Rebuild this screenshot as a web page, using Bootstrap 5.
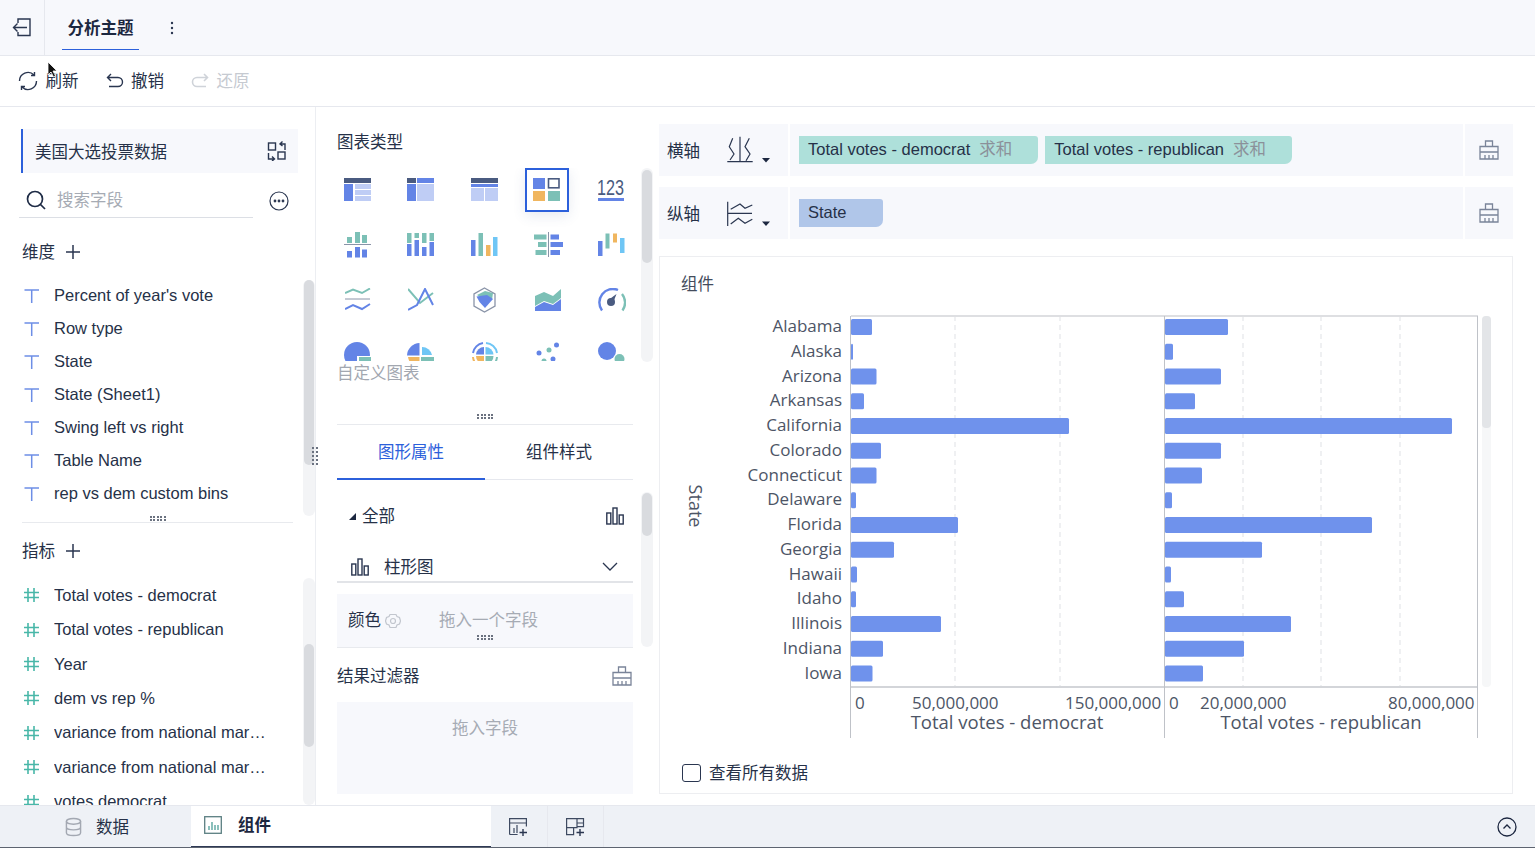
<!doctype html>
<html lang="zh"><head><meta charset="utf-8"><title>分析主题</title>
<link href="https://cdn.jsdelivr.net/npm/bootstrap@5.3.0/dist/css/bootstrap.min.css" rel="stylesheet">
<style>
html,body{height:100%;overflow:hidden}
body{font-family:"Liberation Sans","Noto Sans CJK SC",sans-serif;font-size:16.5px;color:#263148;background:#fff;position:relative}
svg{display:block;flex:none}
.ico{fill:none;stroke:#2a3650;stroke-width:1.4}
.nudge{margin-top:2px}
.app{height:848px;width:1535px}
.topbar{height:56px;background:#f7f8fc;border-bottom:1px solid #e6e8ee}
.backcell{width:45px;height:55px;border-right:1px solid #e6e8ee}
.toptab{margin-left:17px;width:77px;height:50px;border-bottom:1px solid #2c60db;font-weight:700;color:#1c2740;padding-top:16px;align-self:flex-start;text-align:center}
.kebab{margin-left:27px}
.tool-bar{height:51px;border-bottom:1px solid #e6e8ee;padding-left:18px}
.toolbtn{gap:7.5px;margin-right:27px}
.muted-t{color:#c6cad1}
.body-row{height:698px}
.leftp{width:316px;border-right:1px solid #eceef2;padding-top:22px;position:relative}
.dsbox{margin-left:21px;width:277px;height:44px;background:#f7f8fc;border-left:2px solid #2c60db;padding:0 11px 0 12px}
.searchrow{margin:10px 0 0 19px;width:270px}
.searchin{width:234px;height:35px;border-bottom:1px solid #dcdfe5;color:#a6abb4;gap:11px;padding-left:7px}
.head-r{margin-left:22px;gap:11px;height:28px}
.hd1{margin-top:20px}.hd2{margin-top:14px}
.fieldlist{position:relative;margin-left:22px;overflow:hidden}
.fld{gap:14px;white-space:nowrap}
.fld span{display:block;overflow:hidden;text-overflow:ellipsis;width:212px}
.d1{height:237px;margin-top:13px}.d1 .fld{height:33px}
.d2{height:227px;margin-top:13px}.d2 .fld{height:34.4px}
.trk{position:absolute;background:#f3f4f6;border-radius:6px;width:12px}
.thm{position:absolute;background:#d9dbdf;border-radius:5px;width:10px;left:1px}
.trk1{left:303px;top:173px;height:236px}.trk1 .thm{top:0;height:185px}
.trk2{left:303px;top:471px;height:227px}.trk2 .thm{top:66px;height:103px}
.trk3{left:325px;top:61px;height:194px}.trk3 .thm{top:2px;height:93px}
.trk4{left:325px;top:385px;height:155px}.trk4 .thm{top:1px;height:43px}
.grip{display:grid;grid-template-columns:repeat(5,2px);gap:1px 1.5px;width:16px;height:5px;margin:0 auto}
.grip i{background:#6b7280;height:2px}
.gripv{position:absolute;left:312px;top:340px;display:grid;grid-template-columns:repeat(2,2px);gap:2px 2px}
.gripv i{background:#6b7280;width:2px;height:2px}
.gripbox{height:5px;width:271px;margin-left:22px}
.hr1{height:1px;background:#e8eaee;margin:1px 0 0 22px;width:271px}
.midp{width:343px;padding:25px 0 0 21px;position:relative}
.mid-in{width:296px}
.ttl{line-height:20px}
.ctgrid{display:grid;grid-template-columns:repeat(5,44px);column-gap:19.5px;row-gap:11px;height:193px;overflow:hidden;margin:16px 0 0 -2.5px;align-content:start}
.ct{width:44px;height:44px;display:flex;align-items:center;justify-content:center;padding-left:2px}
.ct.sel{border:2px solid #2c60db;box-shadow:0 4px 12px rgba(60,80,140,.12);padding-left:0}
.custom-t{color:#a2a7b0;height:24px;line-height:24px}
.gripm{margin-top:29px}
.hr2{height:1px;background:#e8eaee;margin-top:5px}
.tabs-r{height:55px;border-bottom:1px solid #e6e8ee}
.tb{flex:1;text-align:center;padding-top:15px;height:55px}
.tb.on{color:#2c60db;border-bottom:2px solid #2c60db}
.allrow{height:46px;margin-top:13px;padding:0 9px 0 12px}
.tri{width:0;height:0;border-left:7px solid transparent;border-bottom:7px solid #1c2740;margin-right:6px}
.barsel{height:42px;border-bottom:2px solid #e2e4e8;padding:12px 15px 0 14px;margin-top:2px}
.barlbl{margin-left:15px}
.colorb{margin-top:11px;height:53px;background:#f7f8fc;position:relative;padding:0 0 0 11px}
.ph{color:#a6abb4}
.phc{margin-left:38px}
.gripc{position:absolute;left:140px;top:41px}
.hr3{height:1px;background:#e8eaee}
.rfilt{height:54px;padding:2px 1px 0 0}
.dropz{height:92px;background:#f7f8fc;text-align:center;padding-top:14px}
.rightp{width:854px;padding-top:17px}
.axisrow{height:52px;background:#f7f8fc;margin-bottom:11px}
.axlab{width:131px;height:52px;border-right:2px solid #fff;padding-left:8px}
.axic{margin-left:27px}
.axpills{flex:1;padding-left:9px;gap:7px}
.pill{height:28px;border-radius:0 3px 7px 0;padding:0 26px 2px 9px;white-space:nowrap;gap:9px}
.pillg{background:#aee0da}.pillb{background:#b0c6e9;width:84px}
.sumt{color:#8b9099}
.axbr{width:50px;height:52px;border-left:2px solid #fff}
.chartc{height:538px;width:854px;border:1px solid #edeef1;margin-top:17px;padding:15px 21px}
.chartt{height:25px;line-height:25px;color:#444c5c}
.cl{font-family:"Open Sans",sans-serif;font-size:17px;fill:#4d5566}
.cl2{font-size:18.5px}
.cl3{font-size:18px}
.viewall{gap:8px;margin:14px 0 0 1px}
.cbx{width:19px;height:18px;border:1.4px solid #2a3650;border-radius:3px;background:#fff}
.footbar{height:43px;background:#eef1f6;border-top:1px solid #e6e8ee;position:relative}
.ftab{height:42px}
.ftab1{width:191px;padding-left:65px;gap:14px}
.ftab2{width:300px;background:#fff;padding-left:13px;font-weight:700;gap:16px;border-bottom:2px solid #2f3a55;padding-bottom:2px;color:#1c2740}
.fbtn{width:56.5px;height:42px;border-right:1px solid #e6e8ee}
.fend{margin-left:auto;margin-right:18px}
.cursor{position:absolute;left:47px;top:61px;z-index:5}
.bline{position:absolute;left:0;right:0;bottom:0;height:1px;background:#5d6470}
</style></head><body>
<div class="app d-flex flex-column">
 <div class="topbar d-flex align-items-center">
  <div class="backcell d-flex align-items-center justify-content-center">
   <svg width="20" height="20" viewBox="0 0 20 20" class="ico"><path d="M6 5V1h12v16.500H6v-3.500M15 9.500H1.500M5.500 5.500 1.500 9.500l4 4"/></svg>
  </div>
  <div class="toptab">分析主题</div>
  <svg class="kebab" width="12" height="14" viewBox="0 0 12 14" fill="#2a3650"><circle cx="6" cy="2" r="1.2"/><circle cx="6" cy="7" r="1.2"/><circle cx="6" cy="12" r="1.2"/></svg>
 </div>
 <div class="tool-bar d-flex align-items-center">
  <div class="toolbtn d-flex align-items-center">
   <svg width="20" height="20" viewBox="0 0 20 20" class="ico"><path d="M1.500 10A8.500 8.500 0 0 1 16 4M18.500 10A8.500 8.500 0 0 1 4 16M16.500 1v3.500H13M3.500 19v-3.500H7"/></svg><span>刷新</span></div>
  <div class="toolbtn d-flex align-items-center">
   <svg width="18" height="18" viewBox="0 0 18 18" class="ico"><path d="M5 2 1.500 5.500 5 9M2 5.500h10a4.500 4.500 0 0 1 0 9H3"/></svg><span>撤销</span></div>
  <div class="toolbtn d-flex align-items-center muted-t">
   <svg width="18" height="18" viewBox="0 0 18 18" fill="none" stroke="#cfd3d9" stroke-width="1.600"><path d="M13 2 16.500 5.500 13 9M16 5.500H6a4.500 4.500 0 0 0 0 9h9"/></svg><span>还原</span></div>
 </div>
 <div class="body-row d-flex">
  <div class="leftp">
   <div class="dsbox d-flex align-items-center justify-content-between">
    <span class="nudge">美国大选投票数据</span>
    <svg width="20" height="20" viewBox="0 0 20 20" class="ico"><rect x="1.500" y="2" width="7" height="7"/><rect x="11" y="11" width="7" height="7"/><path d="M1.500 12v6H7M5 15.500 7.500 18 5 20M18 9V3h-5M15.500 5 13 3l2.500-2.500"/></svg>
   </div>
   <div class="searchrow d-flex justify-content-between align-items-center">
    <div class="searchin d-flex align-items-center">
     <svg width="20" height="20" viewBox="0 0 20 20" fill="none" stroke="#1f2c46" stroke-width="1.700"><circle cx="9" cy="9" r="7.500"/><path d="m14.500 14.500 4.500 4.500"/></svg><span>搜索字段</span></div>
    <svg width="20" height="20" viewBox="0 0 20 20" fill="none" stroke="#2a3650" stroke-width="1.200"><circle cx="10" cy="10" r="9"/><circle cx="6" cy="10" r=".8" fill="#2a3650"/><circle cx="10" cy="10" r=".8" fill="#2a3650"/><circle cx="14" cy="10" r=".8" fill="#2a3650"/></svg>
   </div>
   <div class="head-r hd1 d-flex align-items-center"><span>维度</span>
    <svg width="14" height="14" viewBox="0 0 14 14" stroke="#2a3650" stroke-width="1.500"><path d="M7 0v14M0 7h14"/></svg></div>
   <div class="fieldlist d1">
    <div class="fld d-flex align-items-center"><svg width="18" height="14" viewBox="0 0 18 14" stroke="#6d8ee6" stroke-width="1.500" fill="none"><path d="M2.500 1h14.500M9.700 1v13"/></svg><span>Percent of year's vote</span></div>
    <div class="fld d-flex align-items-center"><svg width="18" height="14" viewBox="0 0 18 14" stroke="#6d8ee6" stroke-width="1.500" fill="none"><path d="M2.500 1h14.500M9.700 1v13"/></svg><span>Row type</span></div>
    <div class="fld d-flex align-items-center"><svg width="18" height="14" viewBox="0 0 18 14" stroke="#6d8ee6" stroke-width="1.500" fill="none"><path d="M2.500 1h14.500M9.700 1v13"/></svg><span>State</span></div>
    <div class="fld d-flex align-items-center"><svg width="18" height="14" viewBox="0 0 18 14" stroke="#6d8ee6" stroke-width="1.500" fill="none"><path d="M2.500 1h14.500M9.700 1v13"/></svg><span>State (Sheet1)</span></div>
    <div class="fld d-flex align-items-center"><svg width="18" height="14" viewBox="0 0 18 14" stroke="#6d8ee6" stroke-width="1.500" fill="none"><path d="M2.500 1h14.500M9.700 1v13"/></svg><span>Swing left vs right</span></div>
    <div class="fld d-flex align-items-center"><svg width="18" height="14" viewBox="0 0 18 14" stroke="#6d8ee6" stroke-width="1.500" fill="none"><path d="M2.500 1h14.500M9.700 1v13"/></svg><span>Table Name</span></div>
    <div class="fld d-flex align-items-center"><svg width="18" height="14" viewBox="0 0 18 14" stroke="#6d8ee6" stroke-width="1.500" fill="none"><path d="M2.500 1h14.500M9.700 1v13"/></svg><span>rep vs dem custom bins</span></div>
   </div>
   <div class="gripbox"><div class="grip"><i></i><i></i><i></i><i></i><i></i><i></i><i></i><i></i><i></i><i></i></div></div>
   <div class="hr1"></div>
   <div class="head-r hd2 d-flex align-items-center"><span>指标</span>
    <svg width="14" height="14" viewBox="0 0 14 14" stroke="#2a3650" stroke-width="1.500"><path d="M7 0v14M0 7h14"/></svg></div>
   <div class="fieldlist d2">
    <div class="fld d-flex align-items-center"><svg width="18" height="16" viewBox="0 0 18 16" stroke="#48b7a8" stroke-width="1.600"><path d="M6 1v14M12 1v14M2 5.500h15M2 10.500h15"/></svg><span>Total votes - democrat</span></div>
    <div class="fld d-flex align-items-center"><svg width="18" height="16" viewBox="0 0 18 16" stroke="#48b7a8" stroke-width="1.600"><path d="M6 1v14M12 1v14M2 5.500h15M2 10.500h15"/></svg><span>Total votes - republican</span></div>
    <div class="fld d-flex align-items-center"><svg width="18" height="16" viewBox="0 0 18 16" stroke="#48b7a8" stroke-width="1.600"><path d="M6 1v14M12 1v14M2 5.500h15M2 10.500h15"/></svg><span>Year</span></div>
    <div class="fld d-flex align-items-center"><svg width="18" height="16" viewBox="0 0 18 16" stroke="#48b7a8" stroke-width="1.600"><path d="M6 1v14M12 1v14M2 5.500h15M2 10.500h15"/></svg><span>dem vs rep %</span></div>
    <div class="fld d-flex align-items-center"><svg width="18" height="16" viewBox="0 0 18 16" stroke="#48b7a8" stroke-width="1.600"><path d="M6 1v14M12 1v14M2 5.500h15M2 10.500h15"/></svg><span>variance from national margin</span></div>
    <div class="fld d-flex align-items-center"><svg width="18" height="16" viewBox="0 0 18 16" stroke="#48b7a8" stroke-width="1.600"><path d="M6 1v14M12 1v14M2 5.500h15M2 10.500h15"/></svg><span>variance from national margin</span></div>
    <div class="fld d-flex align-items-center"><svg width="18" height="16" viewBox="0 0 18 16" stroke="#48b7a8" stroke-width="1.600"><path d="M6 1v14M12 1v14M2 5.500h15M2 10.500h15"/></svg><span>votes democrat</span></div>
   </div>
   <div class="trk trk1"><div class="thm"></div></div>
   <div class="trk trk2"><div class="thm"></div></div>
   <div class="gripv"><i></i><i></i><i></i><i></i><i></i><i></i><i></i><i></i><i></i><i></i></div>
  </div>
  <div class="midp">
   <div class="mid-in">
    <div class="ttl">图表类型</div>
    <div class="ctgrid">
     <div class="ct"><svg width="28" height="24"><rect width="27" height="5" fill="#4a5b80"/><rect y="6" width="9" height="17" fill="#6384e6"/><rect x="11" y="6" width="16" height="5" fill="#bfcdf5"/><rect x="11" y="12" width="16" height="5" fill="#bfcdf5"/><rect x="11" y="18" width="16" height="5" fill="#bfcdf5"/></svg></div>
     <div class="ct"><svg width="28" height="24"><rect width="9" height="5" fill="#4a5b80"/><rect x="10" width="17" height="5" fill="#6384e6"/><rect y="6" width="9" height="17" fill="#6384e6"/><rect x="10" y="6" width="17" height="17" fill="#bfcdf5"/></svg></div>
     <div class="ct"><svg width="28" height="24"><rect width="27" height="5" fill="#4a5b80"/><rect y="6" width="27" height="3" fill="#6384e6"/><rect y="10" width="13" height="13" fill="#bfcdf5"/><rect x="14" y="10" width="13" height="13" fill="#bfcdf5"/></svg></div>
     <div class="ct sel"><svg width="28" height="24"><rect width="12" height="11" fill="#6384e6"/><rect x="15.500" y=".8" width="10.500" height="9" fill="#fff" stroke="#4a5b80" stroke-width="1.600"/><rect y="13" width="12" height="10" fill="#f0b65f"/><rect x="15" y="13" width="12" height="10" fill="#7cc0b6"/></svg></div>
     <div class="ct"><svg width="28" height="26"><text x="-1" y="18" font-family="Liberation Sans,sans-serif" font-size="22" fill="#4a5b80" textLength="27" lengthAdjust="spacingAndGlyphs">123</text><rect x="-1" y="21" width="27" height="3" fill="#6384e6"/></svg></div>
     <div class="ct"><svg width="28" height="26"><rect x="3" y="5" width="5" height="6" fill="#7cc0b6"/><rect x="11" width="5" height="11" fill="#7cc0b6"/><rect x="18" y="3" width="5" height="8" fill="#7cc0b6"/><rect y="12" width="27" height="1" fill="#8a94a8"/><rect x="3" y="19" width="5" height="6.500" fill="#6384e6"/><rect x="11" y="15" width="5" height="10.500" fill="#6384e6"/><rect x="18" y="17.500" width="5" height="8" fill="#6384e6"/></svg></div>
     <div class="ct"><svg width="28" height="24"><rect width="4.500" height="10" fill="#7cc0b6"/><rect y="11" width="4.500" height="12" fill="#6384e6"/><rect x="7.500" width="4.500" height="5" fill="#7cc0b6"/><rect x="7.500" y="7" width="4.500" height="16" fill="#6384e6"/><rect x="15" width="4.500" height="10" fill="#7cc0b6"/><rect x="15" y="14" width="4.500" height="9" fill="#6384e6"/><rect x="22.500" width="4.500" height="8" fill="#7cc0b6"/><rect x="22.500" y="9" width="4.500" height="14" fill="#6384e6"/></svg></div>
     <div class="ct"><svg width="28" height="24"><rect y="7" width="4.500" height="16" fill="#6384e6"/><rect x="7.500" width="4.500" height="23" fill="#7cc0b6"/><rect x="15" y="12" width="4.500" height="11" fill="#f0b65f"/><rect x="22" y="4" width="4.500" height="19" fill="#6fc6f5"/></svg></div>
     <div class="ct"><svg width="29" height="26"><rect x="14" width="1" height="25" fill="#8a94a8"/><rect y="2.500" width="12.500" height="5" fill="#7cc0b6"/><rect x="4" y="10" width="8.500" height="5" fill="#7cc0b6"/><rect x="1.500" y="18" width="11" height="5" fill="#7cc0b6"/><rect x="16.500" y="2.500" width="8.500" height="5" fill="#6384e6"/><rect x="16.500" y="10" width="12.500" height="5" fill="#6384e6"/><rect x="16.500" y="18" width="9.500" height="5" fill="#6384e6"/></svg></div>
     <div class="ct"><svg width="28" height="24"><rect y="8" width="4.500" height="15" fill="#6384e6"/><rect x="7.500" y=".5" width="4" height="15" fill="#7cc0b6"/><rect x="15" y=".5" width="4" height="9" fill="#f0b65f"/><rect x="22" y="5" width="4.500" height="15" fill="#6fc6f5"/></svg></div>
     <div class="ct"><svg width="26" height="24" fill="none" stroke-width="2"><path d="m0 5 8-3.500L17 5l8-4.500" stroke="#7cc0b6"/><path d="M0 11h25" stroke="#8a94a8" stroke-width="1"/><path d="m0 21 8-4 9 4 8-5" stroke="#6384e6"/></svg></div>
     <div class="ct"><svg width="27" height="24" fill="none" stroke-width="2"><path d="m0 1 12 14L25 5" stroke="#7cc0b6"/><path d="m0 22 9-5 8-16 8 16" stroke="#6384e6"/></svg></div>
     <div class="ct"><svg width="24" height="26"><path d="m11.500 1 10.500 6v12l-10.500 6L1 19V7z" fill="#fff" stroke="#8a94a8" stroke-width="1.300"/><path d="m4 8 8-4 8 2-1 7-9-1z" fill="#7cc0b6"/><path d="m3.500 9.500 10.500-1.500 6 4-8 9-5.500-6z" fill="#6384e6"/></svg></div>
     <div class="ct"><svg width="27" height="23"><path d="m0 7 9-4 9 4 8-7v22H0z" fill="#7cc0b6"/><path d="m0 17 9-5 9 3 8-6v13H0z" fill="#fff"/><path d="m0 18 9-5 9 3 8-6v12H0z" fill="#6384e6"/></svg></div>
     <div class="ct"><svg width="28" height="24" fill="none"><path d="M4 22.500A13.500 13.500 0 0 1 20 2" stroke="#6384e6" stroke-width="2.400"/><path d="M24 6A13.500 13.500 0 0 1 24.500 22.500" stroke="#7cc0b6" stroke-width="2.400"/><circle cx="13" cy="14" r="4" fill="#4a5b80"/><path d="m11 11.500 7.500-5.500-3.500 9z" fill="#4a5b80"/></svg></div>
     <div class="ct"><svg width="28" height="26"><circle cx="13" cy="13" r="13" fill="#6384e6"/><rect x="13" y="14" width="15" height="12" fill="#fff"/><rect x="15" y="15" width="12" height="11" fill="#7cc0b6"/></svg></div>
     <div class="ct"><svg width="28" height="26"><path d="M12.500 1v12.500H0A13 13 0 0 1 12.500 1z" fill="#6384e6"/><path d="M15 5v8h10a10 10 0 0 0-10-8z" fill="#6fc6f5"/><path d="M12.500 15v11A13 13 0 0 1 1 15z" fill="#f0b65f"/><path d="M14 15h13v11H14z" fill="#7cc0b6"/></svg></div>
     <div class="ct"><svg width="28" height="26" fill="none"><path d="M2 11A12 12 0 0 1 12 1" stroke="#6384e6" stroke-width="2"/><path d="M15 1a12 12 0 0 1 11 10" stroke="#6fc6f5" stroke-width="2"/><path d="M2 15a12 12 0 0 0 4 8" stroke="#f0b65f" stroke-width="2"/><path d="M26 15a12 12 0 0 1-4 8" stroke="#7cc0b6" stroke-width="2"/><path d="M13 5v7.500H5A8 8 0 0 1 13 5z" fill="#6384e6"/><path d="M14.500 5a8 8 0 0 1 8 7.500h-8z" fill="#6fc6f5"/><path d="M5 14h8v8a8 8 0 0 1-8-8z" fill="#f0b65f"/><path d="M14.500 14h8a8 8 0 0 1-8 8z" fill="#7cc0b6"/></svg></div>
     <div class="ct"><svg width="26" height="26"><circle cx="4" cy="11" r="2.500" fill="#6384e6"/><circle cx="14" cy="8" r="2.500" fill="#7cc0b6"/><circle cx="21.500" cy="3" r="2.500" fill="#6384e6"/><circle cx="9" cy="19" r="2.500" fill="#7cc0b6"/><circle cx="18" cy="17" r="2.500" fill="#6384e6"/></svg></div>
     <div class="ct"><svg width="28" height="26"><circle cx="9" cy="9" r="9" fill="#6384e6"/><circle cx="21.500" cy="17" r="5" fill="#7cc0b6"/><circle cx="12" cy="25" r="3" fill="#f0b65f"/></svg></div>
    </div>
    <div class="custom-t">自定义图表</div>
    <div class="gripm"><div class="grip"><i></i><i></i><i></i><i></i><i></i><i></i><i></i><i></i><i></i><i></i></div></div>
    <div class="hr2"></div>
    <div class="tabs-r d-flex"><div class="tb on">图形属性</div><div class="tb">组件样式</div></div>
    <div class="allrow d-flex align-items-center"><span class="tri"></span><span>全部</span>
     <svg class="ms-auto" width="18" height="18" viewBox="0 0 18 18" fill="none" stroke="#2a3650" stroke-width="1.400"><rect x=".8" y="6" width="4" height="11"/><rect x="7" y="1" width="4" height="16"/><rect x="13.200" y="8" width="4" height="9"/></svg></div>
    <div class="barsel d-flex align-items-center">
     <svg width="18" height="18" viewBox="0 0 18 18" fill="none" stroke="#2a3650" stroke-width="1.400"><rect x=".8" y="6" width="4" height="11"/><rect x="7" y="1" width="4" height="16"/><rect x="13.200" y="8" width="4" height="9"/></svg>
     <span class="barlbl">柱形图</span>
     <svg class="ms-auto" width="16" height="10" viewBox="0 0 16 10" fill="none" stroke="#2a3650" stroke-width="1.300"><path d="m1 1 7 7 7-7"/></svg></div>
    <div class="colorb d-flex align-items-center"><span>颜色</span>
     <svg class="ms-1" width="16" height="16" viewBox="0 0 16 16" fill="none" stroke="#c2c6ce" stroke-width="1.200"><path d="m5 1.500h6l1 2 2.500 1 1 3.500-1 3-2.500 1-1 2.500H5l-1-2.500-2.500-1-1-3 1-3.500L4 3.500z"/><circle cx="8" cy="8" r="2.500"/></svg>
     <span class="ph phc">拖入一个字段</span>
     <div class="gripc"><div class="grip"><i></i><i></i><i></i><i></i><i></i><i></i><i></i><i></i><i></i><i></i></div></div></div>
    <div class="hr3"></div>
    <div class="rfilt d-flex align-items-center justify-content-between"><span>结果过滤器</span>
     <svg width="20" height="20" viewBox="0 0 20 20" fill="none" stroke="#7a8499" stroke-width="1.300"><path d="M6.500 6V1h7v5M1 6.500h18V19H1zM1 12h18M6 15v4M10 15v4M14 15v4"/></svg></div>
    <div class="dropz ph">拖入字段</div>
   </div>
   <div class="trk trk3"><div class="thm"></div></div>
   <div class="trk trk4"><div class="thm"></div></div>
  </div>
  <div class="rightp">
   <div class="axisrow d-flex align-items-center">
    <div class="axlab d-flex align-items-center"><span class="nudge">横轴</span>
     <svg class="axic" width="44" height="30" viewBox="0 0 44 30" fill="none" stroke="#2a3650" stroke-width="1.200"><path d="M5.700 3.300 2.300 11.700 7 19l-4 6M22.300 3.300 18 11.700 23 19l-4 6.700M13 1.700v25M.3 26.700h25.400"/><path d="M35 23h8l-4 4.500z" fill="#1c2740" stroke="none"/></svg></div>
    <div class="axpills d-flex align-items-center">
     <div class="pill pillg d-flex align-items-center"><span>Total votes - democrat</span><span class="sumt">求和</span></div>
     <div class="pill pillg d-flex align-items-center"><span>Total votes - republican</span><span class="sumt">求和</span></div>
    </div>
    <div class="axbr d-flex align-items-center justify-content-center"><svg width="20" height="20" viewBox="0 0 20 20" fill="none" stroke="#7a8499" stroke-width="1.300"><path d="M6.500 6V1h7v5M1 6.500h18V19H1zM1 12h18M6 15v4M10 15v4M14 15v4"/></svg></div>
   </div>
   <div class="axisrow d-flex align-items-center">
    <div class="axlab d-flex align-items-center"><span class="nudge">纵轴</span>
     <svg class="axic" width="44" height="30" viewBox="0 0 44 30" fill="none" stroke="#2a3650" stroke-width="1.200"><path d="M.7 3.700V28M1 15.300h24M3.700 11.300 13 6l5 4.300L25.300 7M3.700 26l7.600-5.700 6.700 5 7.300-4"/><path d="M35 23.500h8l-4 4.500z" fill="#1c2740" stroke="none"/></svg></div>
    <div class="axpills d-flex align-items-center"><div class="pill pillb d-flex align-items-center"><span>State</span></div></div>
    <div class="axbr d-flex align-items-center justify-content-center"><svg width="20" height="20" viewBox="0 0 20 20" fill="none" stroke="#7a8499" stroke-width="1.300"><path d="M6.500 6V1h7v5M1 6.500h18V19H1zM1 12h18M6 15v4M10 15v4M14 15v4"/></svg></div>
   </div>
   <div class="chartc">
    <div class="chartt">组件</div>
    <svg id="chart" width="810" height="450" viewBox="681 297 810 450"></svg>
    <div class="viewall d-flex align-items-center"><span class="cbx d-block"></span><span>查看所有数据</span></div>
   </div>
  </div>
 </div>
 <div class="footbar d-flex">
  <div class="ftab ftab1 d-flex align-items-center"><svg width="17" height="20" viewBox="0 0 18 20" fill="none" stroke="#a3a8b2" stroke-width="1.500"><ellipse cx="9" cy="4" rx="7.500" ry="3"/><path d="M1.500 4v12c0 1.700 3.400 3 7.500 3s7.500-1.300 7.500-3V4M1.500 10c0 1.700 3.400 3 7.500 3s7.500-1.300 7.500-3"/></svg><span>数据</span></div>
  <div class="ftab ftab2 d-flex align-items-center"><svg width="18" height="18" viewBox="0 0 18 18" fill="none"><rect x=".7" y=".7" width="16.600" height="16.600" stroke="#5b7f82" stroke-width="1.300"/><path d="M5 14v-4M8 14V6M11 14V9M14 14v-5" stroke="#5aa6a0" stroke-width="1.400"/></svg><span>组件</span></div>
  <div class="fbtn d-flex align-items-center justify-content-center"><svg width="19" height="18" viewBox="0 0 19 18" fill="none" stroke="#3e4a61" stroke-width="1.200"><path d="M.6 16.500V.6h16.800v8M.6 5h16.800M.6 16.500h8"/><path d="M5 15V10M8 15V7"/><path d="M14 11v7M10.500 14.500h7.500" stroke="#2a3650" stroke-width="1.400"/></svg></div>
  <div class="fbtn d-flex align-items-center justify-content-center"><svg width="19" height="18" viewBox="0 0 19 18" fill="none" stroke="#3e4a61" stroke-width="1.200"><path d="M.6.600h10.400v9H.6zM.6 9.600h7v7H.6zM11 .6h6.500v8H11M11 5h6.500"/><path d="M14 11v7M10.500 14.500h7.500" stroke="#2a3650" stroke-width="1.400"/></svg></div>
  <div class="fend d-flex align-items-center"><svg width="20" height="20" viewBox="0 0 20 20" fill="none" stroke="#1c2740" stroke-width="1.300"><circle cx="10" cy="10" r="9"/><path d="m6.500 11.500 3.500-3.500 3.500 3.500"/></svg></div>
  <div class="bline"></div>
 </div>
</div>
<svg class="cursor" width="12" height="18" viewBox="0 0 12 18"><path d="M1 1v13l3-3 2.500 5 2-1L6 10h4z" fill="#111" stroke="#fff" stroke-width=".8"/></svg>
<script>
const S=['Alabama','Alaska','Arizona','Arkansas','California','Colorado','Connecticut','Delaware','Florida','Georgia','Hawaii','Idaho','Illinois','Indiana','Iowa'];
const L=[872,853,876.5,864,1069,881,876.5,856,958,894,857,856,941,883,872.5];
const R=[1228,1173,1221,1195,1452,1221,1202,1172,1372,1262,1171,1184,1291,1244,1203];
let h='';
const gl=(x)=>`<line x1="${x}" x2="${x}" y1="316" y2="687" stroke="#dfe1e5" stroke-dasharray="5 4"/>`;
[955,1060,1243,1321,1400].forEach(x=>h+=gl(x));
h+='<rect x="851" y="315" width="627" height="2" fill="#dedfe2"/>';
S.forEach((s,i)=>{const y=327+i*24.75;
 h+=`<text class="cl" x="842" y="${y+5}" text-anchor="end">${s}</text>`;
 h+=`<rect x="851" y="${y-8}" width="${L[i]-851}" height="16" rx="1.500" fill="#6f92ec"/>`;
 h+=`<rect x="1165" y="${y-8}" width="${R[i]-1165}" height="16" rx="1.500" fill="#6f92ec"/>`;});
h+='<rect x="850" y="686" width="628" height="2" fill="#d3d5d9"/>';
[850.5,1164.5,1477.5].forEach(x=>h+=`<line x1="${x}" x2="${x}" y1="316" y2="738" stroke="#bfc2c8"/>`);
[[855,'0'],[912,'50,000,000'],[1065,'150,000,000'],[1169,'0'],[1200,'20,000,000'],[1388,'80,000,000']].forEach(a=>h+=`<text class="cl" x="${a[0]}" y="709">${a[1]}</text>`);
h+='<text class="cl cl2" x="1007" y="729" text-anchor="middle">Total votes - democrat</text>';
h+='<text class="cl cl2" x="1321" y="729" text-anchor="middle">Total votes - republican</text>';
h+='<text class="cl cl3" transform="translate(689 506) rotate(90)" text-anchor="middle">State</text>';
h+='<rect x="1482" y="316" width="9" height="371" rx="4" fill="#f6f7f8"/><rect x="1482" y="316" width="9" height="112" rx="4" fill="#e3e5e8"/>';
document.getElementById('chart').innerHTML=h;
</script>
</body></html>
